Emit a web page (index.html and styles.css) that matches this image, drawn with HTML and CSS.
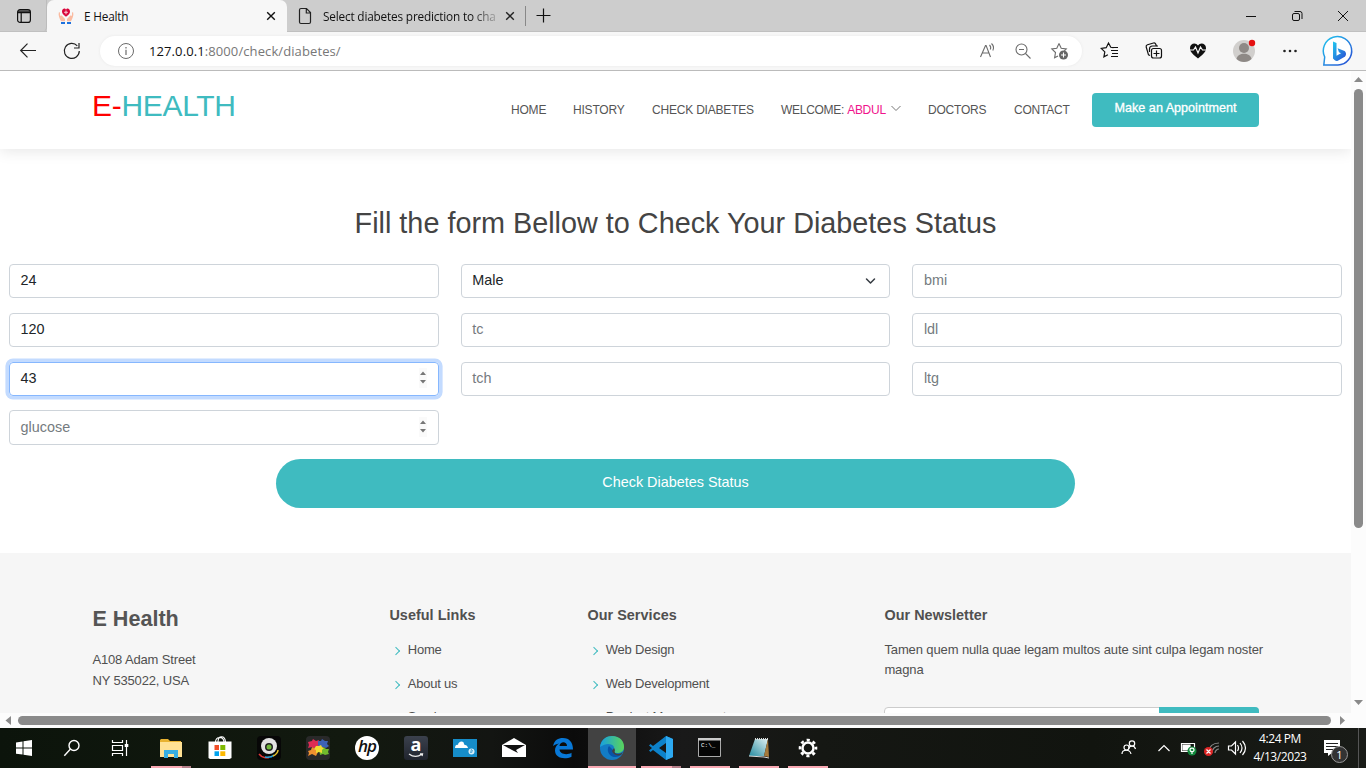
FILE: index.html
```html
<!DOCTYPE html>
<html lang="en">
<head>
<meta charset="utf-8">
<title>E Health</title>
<link rel="stylesheet" href="styles.css">
</head>
<body>
<div class="tabbar">
  <div class="tab-menu"><svg width="16" height="16" viewBox="0 0 16 16" fill="none" stroke="#111" stroke-width="1.2"><rect x="1.600" y="1.600" width="12.800" height="12.800" rx="2.500"/><path d="M2 3.200h12M2 4.700h12M5.200 5v9"/></svg></div>
  <div class="tab active">
    <svg class="fav" width="16" height="16" viewBox="0 0 16 16"><path d="M8 8.800C5 6.700 4 5.500 4 3.300 4.400 0 7.300 0 8 1.800 8.700 0 11.600 0 12 3.300c0 2.200-1 3.400-4 5.500z" fill="#d9063b"/><path d="M8 2.600v3.600M6.200 4.300h3.600" stroke="#f6b3c2" stroke-width="1.200"/><path d="M.8 4.500C0 7.600 1.700 10.500 3 13.200h4V11L3.700 7.500 2 7.800 2 4.200zM15.200 4.500C16 7.600 14.300 10.500 13 13.200H9V11l3.300-3.500 1.700.3V4.200z" fill="#fabba1"/><path d="M3 14h4v2H3zM9 14h4v2H9z" fill="#1d72df"/></svg>
    <span class="tab-title">E Health</span>
    <svg class="x" width="10" height="10" viewBox="0 0 10 10" stroke="#111" stroke-width="1.400"><path d="M1.200 1.200l7.600 7.600M8.800 1.200L1.200 8.800"/></svg>
  </div>
  <div class="tab second">
    <svg class="fav" width="16" height="18" viewBox="0 0 16 18" fill="none" stroke="#222" stroke-width="1.200"><path d="M4 1.500h5.500l4 4V15a1.500 1.500 0 0 1-1.500 1.500H4A1.500 1.500 0 0 1 2.500 15V3A1.500 1.500 0 0 1 4 1.500zM9.300 1.700V6h4"/></svg>
    <span class="tab-title long">Select diabetes prediction to cha</span>
    <svg class="x2" width="10" height="10" viewBox="0 0 10 10" stroke="#222" stroke-width="1.400"><path d="M1.200 1.200l7.600 7.600M8.800 1.200L1.200 8.800"/></svg>
  </div>
  <svg class="plus" width="15" height="15" viewBox="0 0 15 15" stroke="#111" stroke-width="1.200"><path d="M7.500 .5v14M.5 7.500h14"/></svg>
  <svg class="winbtns" width="110" height="16" viewBox="0 0 110 16" fill="none" stroke="#111"><path d="M2 8.500h10" /><rect x="48.500" y="5.500" width="7" height="7" rx="1.500"/><path d="M50.500 3.500h5.500a2 2 0 0 1 2 2v5.500M94 3l10 10M104 3L94 13"/></svg>
</div>
<div class="toolbar">
  <svg class="navicons" width="64" height="20" viewBox="0 0 64 20" fill="none" stroke="#222" stroke-width="1.200"><path d="M20 9.500H4.500M11.500 2.700L4.700 9.500l6.800 6.800"/><path d="M63.300 10a7.500 7.500 0 1 1-2-5.200M63 2v5h-5"/></svg>
  <div class="address">
    <svg width="18" height="18" viewBox="0 0 18 18" fill="none" stroke="#6b6b6b"><circle cx="9" cy="9" r="7.500"/><path d="M9 7.700v5.300M9 5v1.500" stroke-width="1.200"/></svg>
    <span class="url"><b>127.0.0.1</b>:8000/check/diabetes/</span>
    <svg class="addr-icons" width="94" height="20" viewBox="0 0 94 20" fill="none" stroke="#6c6c6c" stroke-width="1.100"><path d="M3.500 16L8.500 4.500h.6L13.500 16M5.300 12h6.500M12.500 4c1.500 1.500 1.500 3 .8 4.500M14.500 2.500c2.300 2.200 2.300 5 1.300 7"/><circle cx="44.500" cy="8.500" r="5.500"/><path d="M42 8.500h5M48.500 12.500l5 5"/><path d="M82 2.500l-2.200 4.700-5 .7 3.700 3.600-.9 5.300 3.400-1.900M82 2.500l2.200 4.700 5.100.7-2 2"/><circle cx="86.500" cy="14" r="4.500" fill="#666" stroke="none"/><path d="M84 14h5M86.500 11.500v5" stroke="#fff"/></svg>
  </div>
  <svg class="tools" width="264" height="34" viewBox="0 0 264 34" fill="none" stroke="#111" stroke-width="1.200">
    <path d="M13.500 13.700l-2.700-.4L8.500 9l-2.300 4.700-5 .7 3.600 3.500-.9 5 4-2.100M11 16.500h7M12 19.500h6M11 22.500h7M10.500 13.500H18"/>
    <rect x="51.500" y="14.500" width="10" height="9.500" rx="2"/><path d="M56.500 16.500v6M53.500 19.500h6M50 21.500l-1.500-.7-2.300-7.800a2 2 0 0 1 1.300-2.300l6-1.700a2 2 0 0 1 2.300 1.200l.8 2.300M49.500 18v-3a3 3 0 0 1 3-3h5.500"/>
    <path d="M98 24.500C91 19 90 17 90 14c0-5 6-6 8-2.500 2-3.500 8-2.500 8 2.500 0 3-1 5-8 10.500z" fill="#111" stroke="none"/><path d="M89.500 16h4l2-3 2.500 6 2.500-6 2 3h4.500" stroke="#f7f7f7"/>
    <circle cx="144" cy="17" r="11" fill="#d1cfcd" stroke="none"/><circle cx="144" cy="14" r="5" fill="#8e8986" stroke="none"/><path d="M136.500 25c1-7 14-7 15 0-4 4-11 4-15 0z" fill="#8e8986" stroke="none"/><circle cx="152" cy="9" r="3.200" fill="#e51111" stroke="none"/>
    <g fill="#222" stroke="none"><circle cx="184.500" cy="17" r="1.300"/><circle cx="190" cy="17" r="1.300"/><circle cx="195.500" cy="17" r="1.300"/></g>
    <defs><linearGradient id="bing" x1="0" y1="0" x2="1" y2="1"><stop stop-color="#21c8ef"/><stop offset="1" stop-color="#294ad3"/></linearGradient></defs>
    <path d="M223.800 31l.9-8A14.200 14.200 0 1 1 238 31z" fill="#fff" stroke="url(#bing)" stroke-width="1.500"/>
    <path d="M233 7.500l3.500 1.400v12.800l4.500-2.500-2-1-1.400-4 7 2.700c2.300 2 1.500 5-.3 6.200l-6.500 3.600q-1.500.6-3-.4L233 24.500z" fill="url(#bing)" stroke="none"/>
  </svg>
</div>
<div class="window">
  <div class="page">
    <header class="site-header">
      <div class="logo"><span>E-</span>HEALTH</div>
      <nav class="nav"><a>HOME</a><a>HISTORY</a><a>CHECK DIABETES</a><a class="user">WELCOME: <i>ABDUL</i><svg width="12" height="8" viewBox="0 0 12 8" fill="none" stroke="#777"><path d="M1.500 1L6 5.500l4.500-4.500"/></svg></a><a>DOCTORS</a><a>CONTACT</a></nav>
      <div class="appoint">Make an Appointment</div>
    </header>
    <main class="main">
      <h1>Fill the form Bellow to Check Your Diabetes Status</h1>
      <form class="grid">
        <div class="field">24</div>
        <div class="field">Male<svg width="12" height="12" viewBox="0 0 12 12" fill="none" stroke="#343a40" stroke-width="1.500" stroke-linecap="round" stroke-linejoin="round"><path d="M1.500 5l4 4 4-4"/></svg></div>
        <div class="field hint">bmi</div>
        <div class="field">120</div><div class="field hint">tc</div><div class="field hint">ldl</div>
        <div class="field focus">43<svg class="spin" width="8" height="20" viewBox="0 0 8 20"><path fill="#fafafa" d="M0 0h8v20H0z"/><path fill="#777" d="M1 7h6L4 3.500zM1 12h6L4 15.500z"/></svg></div>
        <div class="field hint">tch</div><div class="field hint">ltg</div>
        <div class="field hint">glucose<svg class="spin" width="8" height="20" viewBox="0 0 8 20"><path fill="#fafafa" d="M0 0h8v20H0z"/><path fill="#777" d="M1 7h6L4 3.500zM1 12h6L4 15.500z"/></svg></div>
      </form>
      <div class="submit">Check Diabetes Status</div>
    </main>
    <footer class="footer">
      <section class="about"><h2>E Health</h2><p>A108 Adam Street<br>NY 535022, USA</p></section>
      <section class="links"><h3>Useful Links</h3><ul><li>Home</li><li>About us</li><li>Services</li></ul></section>
      <section class="services"><h3>Our Services</h3><ul><li>Web Design</li><li>Web Development</li><li>Product Management</li></ul></section>
      <section class="news"><h3>Our Newsletter</h3><p>Tamen quem nulla quae legam multos aute sint culpa legam noster<br>magna</p><div class="subscribe"><span></span></div></section>
    </footer>
  </div>
  <div class="vscroll"><svg width="15" height="12" viewBox="0 0 15 12"><path d="M3 11h9L7.500 6z" fill="#8a8a8a"/></svg><div class="vthumb"></div><svg class="down" width="15" height="12" viewBox="0 0 15 12"><path d="M3 1h9L7.500 6z" fill="#8a8a8a"/></svg></div>
</div>
<div class="hscroll"><svg width="18" height="15" viewBox="0 0 18 15"><path d="M11 3v9L5.500 7.500z" fill="#8a8a8a"/></svg><div class="hthumb"></div><svg width="18" height="15" viewBox="0 0 18 15"><path d="M9 3v9l5-4.500z" fill="#8a8a8a"/></svg></div>
<div class="taskbar">
  <div class="sys"><svg width="18" height="18" viewBox="0 0 18 18" fill="#fff"><path d="M1 3.400l6.500-1V8.500H1zM8.500 2.300L17 1v7.500H8.500zM1 9.500h6.500v6.100L1 14.700zM8.500 9.500H17V17l-8.500-1.300z"/></svg></div>
  <div class="sys"><svg width="18" height="18" viewBox="0 0 18 18" fill="none" stroke="#fff" stroke-width="1.400"><circle cx="11" cy="6.500" r="5"/><path d="M7.500 10L1.300 16.700"/></svg></div>
  <div class="sys"><svg width="18" height="18" viewBox="0 0 18 18" fill="none" stroke="#fff" stroke-width="1.200"><path d="M1.500 1v2.500h10V1M1.500 17v-2.500h10V17M1.500 6.500h10v5h-10zM15.500 1v16"/><path d="M13.700 5h3.600v3h-3.600z" fill="#fff" stroke="none"/></svg></div>
  <div class="apps">
    <div class="app run split"><svg width="24" height="24" viewBox="0 0 24 24"><path d="M1 4l1-1h7l2 2h11v16H1z" fill="#e8b231"/><path d="M1 6h22v15H1z" fill="#ffe194"/><path d="M5 22v-8h14v8h-4v-4H9v4z" fill="#37aee2"/></svg></div>
    <div class="app"><svg width="24" height="24" viewBox="0 0 24 24"><path d="M7.500 6c0-6 8-6 8.500 0M10 6c0-7 7-7 7.500 0" fill="none" stroke="#fff" stroke-width="1.100"/><path d="M.5 5.500h23V22l-2 1H2l-1.500-1z" fill="#fff"/><path fill="#f14e28" d="M6.500 9H11v5H6.500z"/><path fill="#7eb900" d="M12.300 9h5v5h-5z"/><path fill="#00a3ee" d="M6.500 15.300H11V20H6.500z"/><path fill="#fdb900" d="M12.300 15.300h5V20h-5z"/></svg></div>
    <div class="app"><svg width="24" height="24" viewBox="0 0 24 24"><rect width="24" height="24" rx="4" fill="#070707"/><circle cx="12" cy="10" r="8" fill="#e2e2e2"/><circle cx="12" cy="11" r="4" fill="#222"/><circle cx="12" cy="11" r="2.500" fill="#71b83b"/><path d="M2 18c3 4 8 4 10 3.500" stroke="#df3836" stroke-width="1.500" fill="none"/><path d="M8 21c4 .8 7 0 9-2" stroke="#2ca5dd" stroke-width="1.500" fill="none"/><path d="M16 20c3-1 5-4 5-6" stroke="#e9c32d" stroke-width="1.500" fill="none"/></svg></div>
    <div class="app"><svg width="24" height="24" viewBox="0 0 24 24"><rect width="24" height="24" rx="4" fill="#292929"/><path d="M2 6l4-1 1-2 3 2 3-1-1 3 2 3-4 1-2 2-2-2-4 1 1-3z" fill="#de2b54"/><path d="M12 5l3 0 1-2 3 2 3 0-1 3 2 2-3 2-3-1-3 1-2-3z" fill="#3e62b7"/><path d="M2 15l3-1 1-3 3 2 3-1 0 4-2 4-4-2-4 2 1-3z" fill="#f09030"/><path d="M13 13l3 0 2-2 2 2 3 0-1 3 1 2-4 1-2-1-3 1z" fill="#72b92d"/><path d="M10 10l3 0 2-1 1 2 2 1-2 2 0 3-3-1-3 1 0-3-2-1z" fill="#f0db34"/></svg></div>
    <div class="app"><span class="hp">hp</span></div>
    <div class="app"><span class="amazon">a<svg width="16" height="5" viewBox="0 0 16 5" fill="none" stroke="#eee" stroke-width="1.300"><path d="M1 1c4 3 9 3 13 0M12 .8h2.500L14 3"/></svg></span></div>
    <div class="app"><svg width="24" height="18" viewBox="0 0 24 18"><path fill="#168dca" d="M0 0h24v18H0z"/><path d="M2 9c0-3 2-4 3-3 0-4 6-5 6-1l3 4z" fill="#fff"/><path d="M9 9c0-3 5-5 6 0z" fill="#fff"/><circle cx="18.500" cy="12.500" r="3" fill="#d9edf8"/><path d="M17.500 14l1-4M18.500 14l1-3" stroke="#168dca" stroke-width=".7"/></svg></div>
    <div class="app"><svg width="26" height="22" viewBox="0 0 26 22"><path d="M1 8l12-7 12 7v12H1z" fill="#fff"/><path d="M2 8h22l-9 5 2 3-6-3z" fill="#111"/></svg></div>
    <div class="app"><svg width="22" height="22" viewBox="0 0 22 22"><path d="M1 9C2.500 3 6 1 11 1c6.500 0 10 4.500 10 11.500H7.500c.3 4.700 7.500 6 12 3.200v4C12.500 23 3 21 3 13.500 3 10.500 4.500 8 7 6.500 4.500 7 2.500 8 1 9zM7.500 9H15c-.1-5-7-5-7.500 0z" fill="#0878d7"/></svg></div>
    <div class="app run current"><svg width="26" height="26" viewBox="0 0 26 26"><defs><linearGradient id="wave"><stop stop-color="#169fe1"/><stop offset="1" stop-color="#5bd55a"/></linearGradient></defs><circle cx="13" cy="13" r="12" fill="#137cc5"/><path d="M1 12C2 4 8 1 13 1c8 0 12 5 12 11 0 4-3 6-7 6-3 0-4-1-3-3 2-5-6-9-14-3z" fill="url(#wave)"/><path d="M10 11c-3 4 0 10 5 11 3 .5 6-1 8-3-2 .8-8 .5-9-4z" fill="#0854a8"/><path d="M15 13c2 3 0 3 1 5 2 1.500 5 1 8-1l-2 3c-5 1.500-8-1-9-4z" fill="#404040"/></svg></div>
    <div class="app run split"><svg width="26" height="26" viewBox="0 0 26 26"><path d="M18 1l7 3v18l-7 3L5 15l-2.500 2L1 15.500 4 13l-3-2.500L2.500 9 5 11zM18 8l-7 5 7 5z" fill="#0d82cb"/><path d="M18 1l7 3v18l-7 3z" fill="#2da9f1"/></svg></div>
    <div class="app run"><svg width="24" height="20" viewBox="0 0 24 20"><path fill="#050505" stroke="#aaa" d="M.5 .5h22v18H.5z"/><path fill="#ccc" d="M0 0h23v2.500H0z"/><text x="3" y="9" fill="#fff" font-size="6" font-family="Liberation Mono">C:\_</text></svg></div>
    <div class="app run"><svg width="24" height="24" viewBox="0 0 24 24"><defs><linearGradient id="note" x1="0" y1="1" x2="1" y2="0"><stop stop-color="#268ba0"/><stop offset="1" stop-color="#e0f1f2"/></linearGradient></defs><path fill="url(#note)" d="M8 3h13l-4 17H2z"/><path d="M21 3l1 18-5-1z" fill="#a67a3c"/><path d="M8 3h13" stroke="#ddd" stroke-width="2" stroke-dasharray="1 1"/><path d="M2 20l15 1 5 1" stroke="#ddd"/></svg></div>
    <div class="app run"><svg width="20" height="20" viewBox="0 0 20 20" fill="none" stroke="#fff"><circle cx="10" cy="10" r="8" stroke-width="2.600" stroke-dasharray="3.140 3.140" stroke-dashoffset="1.570"/><circle cx="10" cy="10" r="5.500" stroke-width="2.500"/></svg></div>
  </div>
  <svg class="tray" width="130" height="40" viewBox="0 0 130 40" fill="none" stroke="#fff" stroke-width="1.200"><circle cx="14" cy="15.500" r="2.700"/><path d="M10.500 21c1-4 6-4 7 0"/><circle cx="8.500" cy="19.500" r="2.500"/><path d="M4 26c0-5 8-5 9 0M40.500 23l5.500-5.500 5.500 5.500"/><path d="M63.500 15.500h13v8h-13z"/><path fill="#fff" d="M65 17h7v5h-7z"/><circle cx="74" cy="23" r="4.500" fill="#11883b" stroke="none"/><path d="M74 26v-3M72 22c0-2.500 4-2.500 4 0s-4 2-4 0"/><path d="M91 25c0-7 4-10 10-10M94 25c0-4 3-7 7-7M97 25c0-2 2-4 4-4" stroke="#888"/><circle cx="90.500" cy="23.500" r="4.500" fill="#db2424" stroke="none"/><path d="M88.500 21.500l4 4M92.500 21.500l-4 4M110.500 18h3l4-4v12l-4-4h-3zM119.500 17q2 3 0 6M122 15q4 5 0 10M124.500 13q6 7 0 14"/></svg>
  <div class="clock"><span>4:24 PM</span><span>4/13/2023</span></div>
  <div class="notif"><svg width="18" height="17" viewBox="0 0 18 17"><path d="M1 0h16v13H9l-4 3v-3H1z" fill="#fff"/><path d="M3 3.500h12M3 6.500h12M3 9.500h8" stroke="#222"/></svg><span>1</span></div>
</div>
</body>
</html>
```

FILE: styles.css
```css
* { box-sizing: border-box; }
body { margin: 0; width: 1366px; height: 768px; overflow: hidden; display: flex; flex-direction: column; font-family: "Liberation Sans", Arial, sans-serif; background: #fff; }
svg { display: block; flex: none; }
h1, h2, h3, p, ul { margin: 0; padding: 0; }

/* browser chrome */
.tabbar { height: 32px; flex: none; background: #cdcdcd; display: flex; align-items: center; font: 12px "Open Sans", sans-serif; color: #111; white-space: nowrap; border-bottom: 1px solid #c0c0c0; }
.tab-menu { width: 47px; height: 32px; padding: 8px 0 0 16px; border-right: 1px solid #bcbcbc; border-radius: 0 0 5px 0; }
.tab { height: 32px; display: flex; align-items: center; }
.tab.active { width: 240px; background: #f7f7f7; border-radius: 7px 7px 0 0; padding-left: 11px; position: relative; }
.tab.active .tab-title { margin-left: 10px; width: 182px; font-size: 11.8px; letter-spacing: -.2px; }
.tab.second { width: 239px; padding-left: 10px; height: 20px; border-right: 1px solid #888; }
.tab-title.long { width: 176px; margin-left: 10px; overflow: hidden; font-size: 11.8px; letter-spacing: -.18px; -webkit-mask-image: linear-gradient(90deg, #000 148px, transparent 180px); mask-image: linear-gradient(90deg, #000 148px, transparent 180px); }
.x2 { margin-left: 6px; }
.plus { margin-left: 10px; }
.winbtns { margin-left: 693px; }
.toolbar { height: 39px; flex: none; background: #f7f7f7; border-bottom: 1px solid #bbb; display: flex; align-items: center; }
.navicons { margin-left: 16px; }
.address { margin-left: 20px; width: 982px; height: 30px; border-radius: 15px; background: #fff; display: flex; align-items: center; padding-left: 17px; box-shadow: 0 0 3px #e8e8e8; }
.url { margin-left: 14px; width: 825px; font: 13px "Open Sans", sans-serif; color: #777; letter-spacing: .1px; }
.url b { font-weight: 400; color: #111; }
.addr-icons { margin-left: 3px; }
.tools { margin-left: 18px; }

/* web page */
.window { height: 642px; flex: none; display: flex; }
.page { width: 1351px; overflow: hidden; display: flex; flex-direction: column; }
.site-header { height: 78px; flex: none; display: flex; align-items: center; padding-left: 92px; box-shadow: 0 2px 14px rgba(0,0,0,.1); }
.logo { width: 419px; color: #3fbbc0; font-size: 30px; line-height: 34px; letter-spacing: -.3px; margin-bottom: 8px; }
.logo span { color: #f00; }
.nav { display: grid; grid-template-columns: 62px 79px 129px 147px 86px 78px; font-size: 12px; letter-spacing: -.2px; color: #555; white-space: nowrap; }
.nav a { display: flex; align-items: center; white-space: pre; }
.nav .user { letter-spacing: -.28px; }
.nav i { font-style: normal; color: #f0148c; }
.nav svg { margin: -2px 0 0 4px; }
.appoint { width: 167px; height: 34px; background: #3fbbc0; border-radius: 4px; color: #fff; text-align: center; font-size: 12.6px; line-height: 31px; -webkit-text-stroke: .3px #fff; }
.main { height: 404px; flex: none; padding: 55px 9px 0; }
h1 { color: #444; text-align: center; font-weight: 400; font-size: 28.8px; line-height: 38px; white-space: nowrap; }
.grid { margin-top: 22px; display: grid; grid-template-columns: repeat(3, 1fr); column-gap: 22px; row-gap: 14.4px; }
.field { height: 34.4px; border: 1px solid #ced4da; border-radius: 4px; color: #212529; font-size: 14.4px; padding: 0 12px 2px 10.6px; display: flex; align-items: center; justify-content: space-between; }
.hint { color: #757b80; }
.field.focus { border-color: #86b7fe; box-shadow: 0 0 0 3.6px #c3dbff; }
.spin { margin-top: 1px; margin-right: -1px; }
.submit { width: 799px; height: 49px; margin: 14px auto 0; border-radius: 25px; background: #3fbbc0; color: #fff; text-align: center; font-size: 14.4px; line-height: 47px; }
.footer { height: 160px; flex: none; background: #f6f6f6; padding: 51px 0 0 92.4px; display: flex; color: #505050; font-size: 13px; letter-spacing: -.15px; }
.about { width: 297px; }
.about h2 { font-size: 21.6px; line-height: 30px; color: #555; letter-spacing: 0; }
.about p { line-height: 21px; margin-top: 15px; }
.links { width: 198px; }
.services { width: 297px; }
.footer h3 { font-size: 14.4px; line-height: 18px; margin-top: 2px; color: #505050; letter-spacing: .05px; white-space: nowrap; }
.footer ul { list-style: none; margin-top: 16px; }
.footer li { height: 34px; line-height: 20px; display: flex; padding-left: 4px; letter-spacing: -.22px; }
.footer li:nth-child(3) { margin-top: -1px; }
.footer li::before { content: ""; width: 4.8px; height: 4.8px; border: solid #3fbbc0; border-width: 1.4px 1.4px 0 0; transform: rotate(45deg); margin: 8px 8.6px 0 0; }
.news { width: 380px; }
.news p { line-height: 19.5px; margin-top: 16px; letter-spacing: -.115px; white-space: nowrap; }
.subscribe { width: 375px; height: 36px; margin-top: 28px; border: 1px solid #ccc; border-radius: 4px; background: #fff; display: flex; justify-content: flex-end; }
.subscribe span { width: 100px; margin: -1px; background: #3fbbc0; border-radius: 0 4px 4px 0; }
.vscroll { width: 15px; background: #fcfcfc; display: flex; flex-direction: column; align-items: center; }
.vthumb { width: 9px; height: 439px; border-radius: 5px; background: #8a8a8a; margin-top: 6px; }
.down { margin-top: 171px; }
.hscroll { height: 15px; flex: none; background: #fcfcfc; display: flex; align-items: center; }
.hthumb { width: 1313px; height: 9px; border-radius: 5px; background: #8a8a8a; }

/* taskbar */
.taskbar { height: 40px; flex: none; background: linear-gradient(90deg, #0c140b, #12190f 25%, #131512 36%, #0b0b0b 42%, #191919 50%, #151713 60%, #11140f 80%, #191b17); display: flex; align-items: center; color: #fff; }
.sys { width: 48px; display: flex; justify-content: center; }
.apps { margin-left: 3px; display: flex; gap: 1px; }
.app { width: 48px; height: 40px; display: flex; align-items: center; justify-content: center; border-bottom: 2px solid transparent; padding-top: 1px; }
.app.run { background: linear-gradient(#f9a9b3, #f9a9b3) 4px 100% / 40px 2px no-repeat border-box; }
.app.split { background: linear-gradient(90deg, #f9a9b3 31px, #b5808a 31px) 4px 100% / 40px 2px no-repeat border-box; }
.app.current { background: linear-gradient(#f9a9b3, #f9a9b3) 0 100% / 48px 2px no-repeat border-box, #424242; }
.hp { width: 24px; height: 24px; border-radius: 50%; background: #fff; color: #111; font: italic 600 17px/20px "Open Sans", sans-serif; text-align: center; letter-spacing: -1px; }
.amazon { width: 24px; height: 24px; border-radius: 3px; background: linear-gradient(#3b414d, #20242e); font: 700 18px/17px "Open Sans", sans-serif; text-align: center; }
.amazon svg { margin: 0 auto; }
.tray { margin-left: 286px; }
.clock { width: 64px; height: 37px; font: 12px/18px "Open Sans", sans-serif; letter-spacing: -.42px; display: flex; flex-direction: column; align-items: center; white-space: nowrap; }
.notif { margin-left: 11px; width: 36px; height: 40px; padding: 12px 0 0; position: relative; border-right: 1px solid #555; }
.notif span { position: absolute; left: 8px; top: 18px; width: 17px; height: 17px; border: 1px solid #999; border-radius: 50%; background: #333; font: 11px/15px "Open Sans", sans-serif; text-align: center; }
```
